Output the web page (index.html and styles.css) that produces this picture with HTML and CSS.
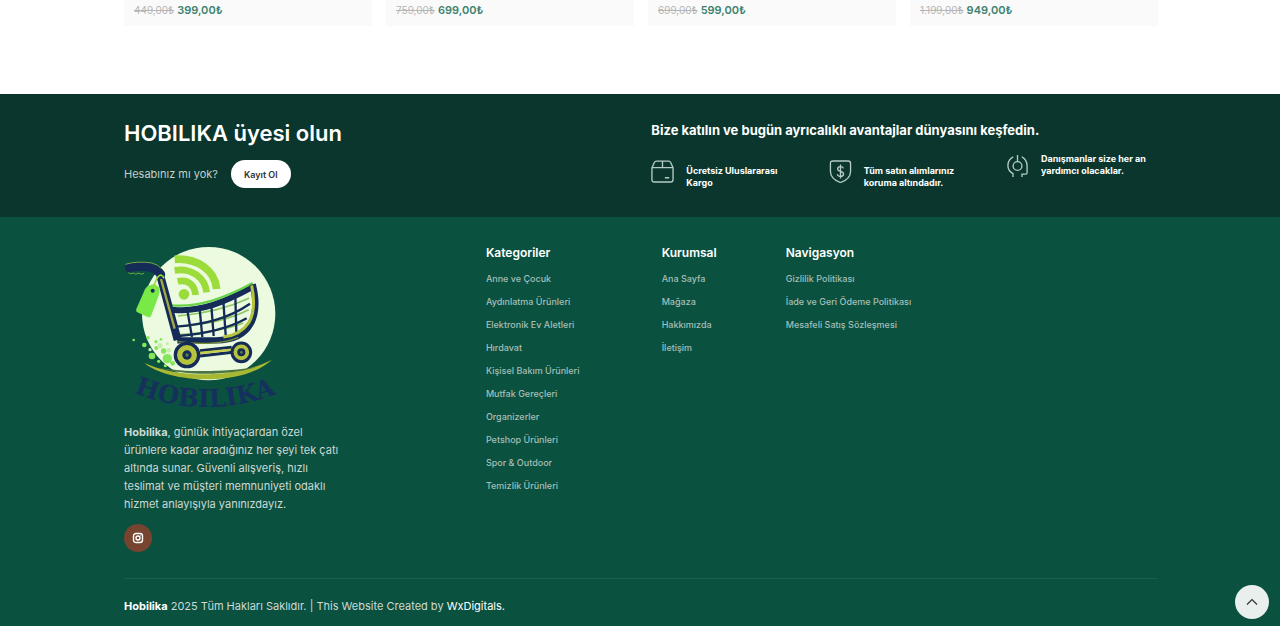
FILE: index.html
```html
<!DOCTYPE html>
<html lang="tr">
<head>
    <meta charset="UTF-8">
    <meta name="viewport" content="width=device-width, initial-scale=1.0">
    <title>Hobilika</title>
    <link rel="stylesheet" href="styles.css">
</head>
<body>
    <main class="container products">
        <div class="product"><del>449,00₺</del> <ins>399,00₺</ins></div>
        <div class="product"><del>759,00₺</del> <ins>699,00₺</ins></div>
        <div class="product"><del>699,00₺</del> <ins>599,00₺</ins></div>
        <div class="product"><del>1.199,00₺</del> <ins>949,00₺</ins></div>
    </main>

    <section class="member">
        <div class="container member-inner">
            <div>
                <h2>HOBILIKA üyesi olun</h2>
                <div class="signup">
                    <span>Hesabınız mı yok?</span>
                    <button type="button" class="signup-btn">Kayıt Ol</button>
                </div>
            </div>
            <div>
                <h3>Bize katılın ve bugün ayrıcalıklı avantajlar dünyasını keşfedin.</h3>
                <div class="features">
                    <div class="feature">
                        <svg class="feature-icon" viewBox="0 0 24 24">
                            <path d="M1 8 3.500 2.600Q4.200 1.200 5.500 1.200H18.500Q19.800 1.200 20.500 2.600L23 8V20.500Q23 23 20.500 23H3.500Q1 23 1 20.500ZM1 8H23M12 1.200V8M14.500 18.500H19"/>
                        </svg>
                        <p class="spaced">Ücretsiz Uluslararası Kargo</p>
                    </div>
                    <div class="feature">
                        <svg class="feature-icon" viewBox="0 0 24 24">
                            <path d="M4 1H20Q22.500 1 22.500 3.500V12C22.500 18 17.500 21.500 12 23.500C6.500 21.500 1.500 18 1.500 12V3.500Q1.500 1 4 1Z"/>
                            <path d="M15 8.800C14.700 7.500 13.500 6.900 12 6.900C10.200 6.900 9 7.900 9 9.300C9 12.800 15.200 11 15.200 14.600C15.200 16.200 13.800 17.200 12 17.200C10.300 17.200 9 16.400 8.800 14.900M12 4.800V19.200"/>
                        </svg>
                        <p class="spaced">Tüm satın alımlarınız koruma altındadır.</p>
                    </div>
                    <div class="feature">
                        <svg class="feature-icon" viewBox="0 0 24 24">
                            <circle cx="12" cy="12.500" r="4.600"/>
                            <path d="M12 1V7.900M7.500 3C4 4.800 2 8.300 2 12.200C2 16 4 18.500 7.300 20.500V24M16.500 3C20 4.800 22 8.300 22 12.500V19.500Q22 21 20.500 21H16.700V24"/>
                        </svg>
                        <p>Danışmanlar size her an yardımcı olacaklar.</p>
                    </div>
                </div>
            </div>
        </div>
    </section>

    <footer class="footer">
        <div class="container">
            <div class="footer-cols">
                <div class="about">
                    <svg class="logo" viewBox="42 30 468 528" role="img" aria-label="Hobilika">
                        <circle cx="296" cy="236" r="200" fill="#ecfae0"/>
                        <!-- signal waves -->
                        <g fill="none" stroke="#9bdc3a" stroke-width="20">
                            <path d="M194 73C260 68 315 105 320 162" stroke-width="23"/>
                            <path d="M194 106C245 98 285 128 290 172"/>
                            <path d="M203 139C235 132 254 150 257 180"/>
                        </g>
                        <circle cx="222" cy="178" r="16" fill="#9bdc3a"/>
                        <!-- bubbles -->
                        <g fill="#86e65a">
                            <circle cx="71" cy="315" r="4"/><circle cx="103" cy="330" r="7"/><circle cx="114" cy="308" r="5"/>
                            <circle cx="126" cy="363" r="10"/><circle cx="139" cy="339" r="6"/><circle cx="146" cy="379" r="5"/>
                            <circle cx="138" cy="320" r="5"/><circle cx="172" cy="371" r="14"/><circle cx="161" cy="348" r="8"/>
                            <circle cx="166" cy="392" r="5"/><circle cx="188" cy="385" r="7"/><circle cx="153" cy="313" r="4"/>
                        </g>
                        <g fill="#c7efae">
                            <circle cx="150" cy="332" r="8"/><circle cx="120" cy="344" r="5"/><circle cx="176" cy="346" r="7"/><circle cx="172" cy="326" r="5"/>
                        </g>
                        <!-- swoosh -->
                        <path d="M103 384C205 430 370 432 486 374C440 415 370 433 290 433C215 433 140 415 103 384Z" fill="#a8b832"/>
                        <path d="M145 398C230 422 350 423 440 396C350 411 230 413 145 398Z" fill="#4d7541"/>
                        <!-- basket -->
                        <path d="M188 216C270 218 350 188 428 144C438 192 438 238 423 267C410 293 382 310 350 315L208 311Z" fill="#ecfae0"/>
                        <g fill="none" stroke="#8bc760" stroke-width="5">
                            <path d="M204 243C275 237 348 222 417 190M207 273C280 269 350 258 416 224M211 299C280 294 350 284 400 264"/>
                        </g>
                        <g fill="none" stroke="#142c57" stroke-width="7">
                            <path d="M200 275C276 269 350 254 420 206M206 303C280 297 350 284 410 250"/>
                            <path d="M232 226 246 306M269 222 277 306M304 212 311 303M340 198 347 300M376 182 379 294"/>
                        </g>
                        <path d="M188 224C270 234 350 198 424 158" fill="none" stroke="#142c57" stroke-width="18"/>
                        <path d="M184 211C270 218 350 186 428 144" fill="none" stroke="#69d447" stroke-width="7"/>
                        <path d="M428 148C440 195 438 238 422 266C403 300 365 316 318 316H202" fill="none" stroke="#142c57" stroke-width="19"/>
                        <path d="M425 151C434 195 432 236 417 262C399 289 374 302 340 306" fill="none" stroke="#b5c33d" stroke-width="9"/>
                        <path d="M205 320C270 330 345 326 385 307" fill="none" stroke="#788e34" stroke-width="4"/>
                        <!-- handle -->
                        <path d="M151 122 203 315" fill="none" stroke="#142c57" stroke-width="24"/>
                        <path d="M153 132 194 281" fill="none" stroke="#a5a943" stroke-width="7"/>
                        <path d="M58 98C75 94 104 93 121 97Q140 101 152 118" fill="none" stroke="#142c57" stroke-width="27" stroke-linecap="round"/>
                        <path d="M46 88Q82 77 126 84Q143 88 157 103M55 113Q62 120 70 114Q77 121 85 114Q94 121 102 115" fill="none" stroke="#75a847" stroke-width="3"/>
                        <!-- price tag -->
                        <path d="M112 154 133 146 149 159 148 177 123 243Q120 249 113 246L82 232Q76 229 79 222L105 163Z" fill="#78e947"/>
                        <path d="M131 163C136 126 153 108 162 130" fill="none" stroke="#9bdc3a" stroke-width="5"/>
                        <circle cx="128" cy="167" r="6" fill="#142c57"/>
                        <!-- wheels -->
                        <path d="M270 347 365 337M270 363 368 352" stroke="#142c57" stroke-width="9"/>
                        <path d="M270 354 366 344" stroke="#c5ce44" stroke-width="7"/>
                        <circle cx="231" cy="360" r="35" fill="#b5c33d" stroke="#142c57" stroke-width="10"/>
                        <circle cx="231" cy="360" r="14" fill="#142c57"/>
                        <circle cx="231" cy="360" r="5" fill="#697c3c"/>
                        <circle cx="394" cy="352" r="28" fill="#b5c33d" stroke="#142c57" stroke-width="9"/>
                        <circle cx="394" cy="352" r="12" fill="#142c57"/>
                        <circle cx="394" cy="352" r="4" fill="#697c3c"/>
                        <path id="name-curve" d="M60 468Q280 563 512 472" fill="none"/>
                        <text class="logo-name"><textPath href="#name-curve" startOffset="50%" text-anchor="middle">HOBILIKA</textPath></text>
                    </svg>
                    <p><strong>Hobilika</strong>, günlük ihtiyaçlardan özel ürünlere kadar aradığınız her şeyi tek çatı altında sunar. Güvenli alışveriş, hızlı teslimat ve müşteri memnuniyeti odaklı hizmet anlayışıyla yanınızdayız.</p>
                    <a href="#" class="social" aria-label="Instagram">
                        <svg viewBox="0 0 12 12">
                            <rect x="1.500" y="1.500" width="9" height="9" rx="2.500"/>
                            <circle cx="6" cy="6" r="2"/>
                            <path d="M8.300 3.600H8.800"/>
                        </svg>
                    </a>
                </div>
                <nav>
                    <h4>Kategoriler</h4>
                    <ul>
                        <li><a href="#">Anne ve Çocuk</a></li>
                        <li><a href="#">Aydınlatma Ürünleri</a></li>
                        <li><a href="#">Elektronik Ev Aletleri</a></li>
                        <li><a href="#">Hırdavat</a></li>
                        <li><a href="#">Kişisel Bakım Ürünleri</a></li>
                        <li><a href="#">Mutfak Gereçleri</a></li>
                        <li><a href="#">Organizerler</a></li>
                        <li><a href="#">Petshop Ürünleri</a></li>
                        <li><a href="#">Spor &amp; Outdoor</a></li>
                        <li><a href="#">Temizlik Ürünleri</a></li>
                    </ul>
                </nav>
                <nav>
                    <h4>Kurumsal</h4>
                    <ul>
                        <li><a href="#">Ana Sayfa</a></li>
                        <li><a href="#">Mağaza</a></li>
                        <li><a href="#">Hakkımızda</a></li>
                        <li><a href="#">İletişim</a></li>
                    </ul>
                </nav>
                <nav>
                    <h4>Navigasyon</h4>
                    <ul>
                        <li><a href="#">Gizlilik Politikası</a></li>
                        <li><a href="#">İade ve Geri Ödeme Politikası</a></li>
                        <li><a href="#">Mesafeli Satış Sözleşmesi</a></li>
                    </ul>
                </nav>
            </div>
            <div class="copyright">
                <strong>Hobilika</strong> 2025 Tüm Hakları Saklıdır. | This Website Created by <a href="#">WxDigitals.</a>
            </div>
        </div>
    </footer>

    <button type="button" class="to-top" aria-label="Yukarı çık">
        <svg viewBox="0 0 12 12"><path d="M1 8.500 6 3.500 11 8.500"/></svg>
    </button>
</body>
</html>
```
FILE: styles.css
```css
* {
    box-sizing: border-box;
}

body {
    margin: 0;
    font-family: Inter, "Liberation Sans", sans-serif;
    font-size: 11px;
    background-color: #ffffff;
    color: #ffffff;
}

h2, h3, h4, p, ul {
    margin: 0;
    padding: 0;
}

a {
    color: inherit;
    text-decoration: none;
}

button {
    font-family: inherit;
    border: none;
    cursor: pointer;
}

.container {
    margin: 0 122px 0 124px;
}

.products {
    display: grid;
    grid-template-columns: repeat(4, 1fr);
    gap: 14px;
    padding-bottom: 68px;
}

.product {
    padding: 2px 10px 8px;
    line-height: 16px;
    background-color: #fafafa;
}

.product del {
    font-size: 10px;
    color: #b5b5b5;
}

.product ins {
    font-weight: 600;
    color: #3d8270;
    text-decoration: none;
}

.member {
    background-color: #0a362d;
}

.member-inner {
    display: grid;
    grid-template-columns: 51% 49%;
    padding: 24px 0 28px;
}

.member h2 {
    font-size: 22px;
    line-height: 30px;
    font-weight: 600;
}

.signup {
    display: flex;
    align-items: center;
    gap: 13px;
    margin-top: 12px;
    color: #c3d0cc;
}

.signup-btn {
    height: 28px;
    padding: 0 13px;
    border-radius: 14px;
    background-color: #ffffff;
    color: #333333;
    font-size: 9px;
    font-weight: 600;
}

.member h3 {
    font-size: 13px;
    line-height: 24px;
    font-weight: 700;
}

.features {
    display: grid;
    grid-template-columns: 35% 35% 30%;
    align-items: start;
    margin-top: 11px;
}

.feature {
    display: flex;
    align-items: center;
    gap: 12px;
}

.feature-icon {
    flex: none;
    width: 23px;
    height: 23px;
    fill: none;
    stroke: #b5cbc4;
    stroke-width: 1.4;
}

.feature p {
    max-width: 112px;
    font-size: 9px;
    line-height: 12px;
    font-weight: 700;
}

.feature .spaced {
    padding-top: 12px;
}

.footer {
    background-color: #0a5140;
}

.footer-cols {
    display: grid;
    grid-template-columns: 35% 17% 12% 1fr;
    padding: 28px 0 26px;
}

.logo {
    display: block;
    width: 156px;
    height: 176px;
}

.logo-name {
    font-family: "DejaVu Serif", serif;
    font-size: 74px;
    font-weight: bold;
    fill: #15305d;
}

.about p {
    max-width: 220px;
    margin: 2px 0 11px;
    line-height: 18px;
    color: #ced9d5;
}

.social {
    display: flex;
    align-items: center;
    justify-content: center;
    width: 28px;
    height: 28px;
    border-radius: 50%;
    background-color: #774430;
}

.social svg {
    width: 12px;
    height: 12px;
    fill: none;
    stroke: #ffffff;
    stroke-width: 1.4;
}

.footer h4 {
    font-size: 12px;
    line-height: 16px;
    font-weight: 600;
}

.footer ul {
    display: grid;
    gap: 7px;
    margin-top: 10px;
    list-style: none;
}

.footer li {
    font-size: 9px;
    font-weight: 500;
    line-height: 16px;
    color: #a5bfb7;
}

.copyright {
    padding: 19px 0 11px;
    border-top: 1px solid #1b5f4f;
    line-height: 17px;
    color: #ced9d5;
}

.copyright strong,
.copyright a {
    color: #ffffff;
}

.to-top {
    position: fixed;
    right: 11px;
    bottom: 7px;
    display: flex;
    align-items: center;
    justify-content: center;
    width: 34px;
    height: 34px;
    padding: 0;
    border-radius: 50%;
    background-color: #e8efed;
}

.to-top svg {
    width: 12px;
    height: 12px;
    fill: none;
    stroke: #333333;
    stroke-width: 1.2;
}
```
